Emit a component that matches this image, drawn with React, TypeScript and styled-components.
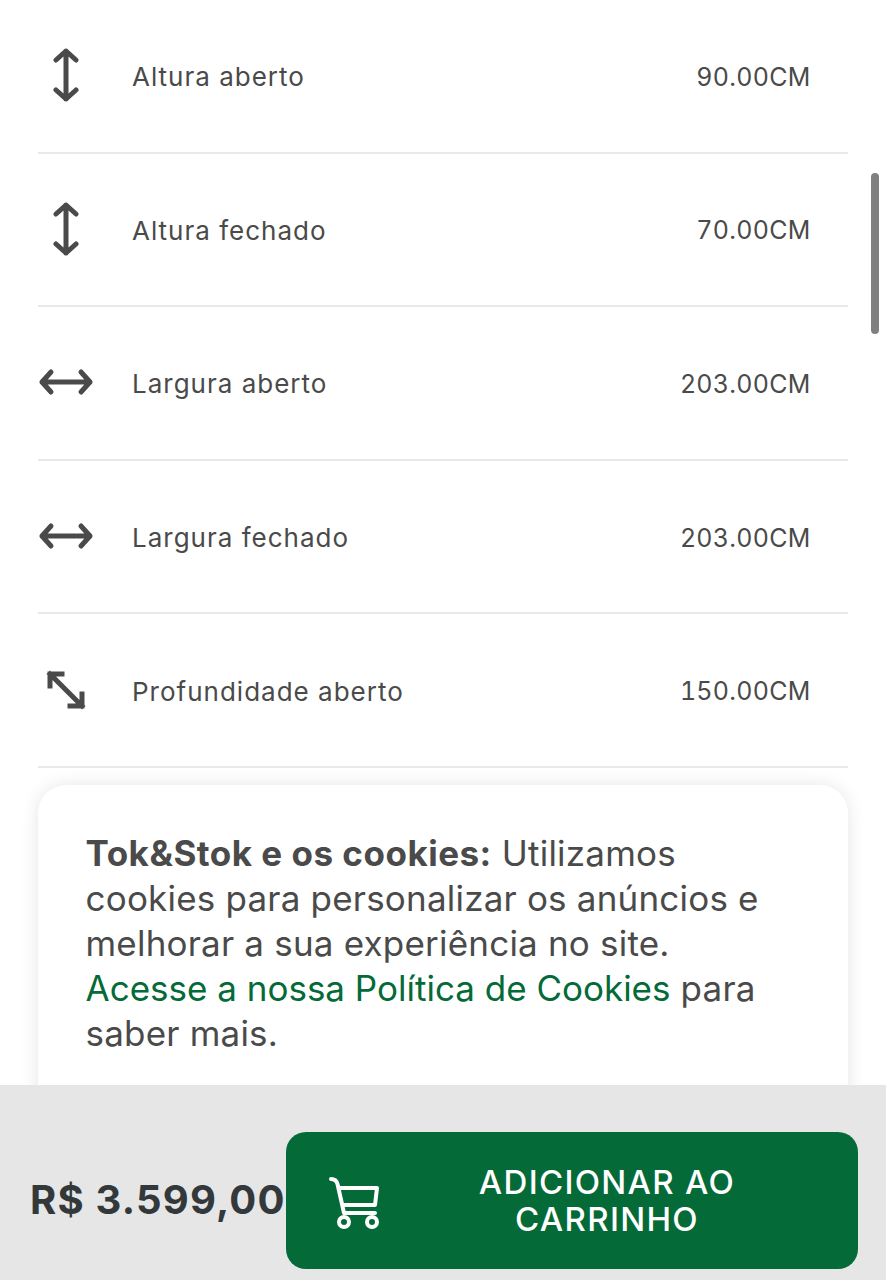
import React from "react";
import styled, { createGlobalStyle } from "styled-components";

const Global = createGlobalStyle`
  html, body { margin: 0; padding: 0; background: #fff; }
  #root { width: 886px; height: 1280px; }
`;

const FONT = `"Inter", "Noto Sans", sans-serif`;

const Page = styled.div`
  position: relative;
  width: 886px;
  height: 1280px;
  overflow: hidden;
  background: #fff;
  font-family: ${FONT};
  color: #4a4a4a;
`;

const SpecList = styled.ul`
  list-style: none;
  margin: 0;
  padding: 0 38px;
`;

const SpecRow = styled.li`
  box-sizing: border-box;
  height: 153.6px;
  display: flex;
  align-items: center;
  border-bottom: 2px solid #e9e9e9;
  padding-right: 37.5px;
`;

const IconSlot = styled.span`
  width: 56px;
  margin-right: 38px;
  flex: none;
  display: flex;
  justify-content: center;
  color: #4a4a4a;
`;

const SpecLabel = styled.span`
  flex: 1;
  padding-top: 2px;
  font-size: 26px;
  letter-spacing: 1px;
`;

const SpecValue = styled.span`
  padding-top: 2px;
  font-size: 25px;
  letter-spacing: 0.25px;
  font-variant-numeric: tabular-nums;
`;

const ScrollThumb = styled.div`
  position: absolute;
  left: 871px;
  top: 173px;
  width: 8px;
  height: 161px;
  border-radius: 4px;
  background: #808080;
`;

const CookieCard = styled.section`
  position: absolute;
  left: 38px;
  top: 785px;
  width: 810px;
  height: 400px;
  box-sizing: border-box;
  padding: 46px 82px 46px 47.5px;
  background: #fff;
  border-radius: 28px;
  box-shadow: 0 0 18px rgba(0, 0, 0, 0.1);
  font-size: 35px;
  line-height: 45px;
  letter-spacing: 0.2px;
`;

const CookieLead = styled.strong`
  letter-spacing: 0.5px;
`;

const CookieLink = styled.span`
  color: #046a38;
  letter-spacing: 0;
`;

const BottomBar = styled.footer`
  position: absolute;
  left: 0;
  right: 0;
  bottom: 0;
  height: 195px;
  box-sizing: border-box;
  display: flex;
  align-items: flex-start;
  padding: 47px 28px 0 30px;
  background: #e6e6e7;
`;

const Price = styled.div`
  width: 256px;
  flex: none;
  align-self: flex-start;
  margin-top: 45px;
  white-space: nowrap;
  font-size: 40px;
  line-height: 46px;
  font-weight: 700;
  letter-spacing: 1.2px;
  color: #33393b;
`;

const AddButton = styled.button`
  flex: 1;
  height: 137px;
  border: 0;
  border-radius: 20px;
  background: #046a38;
  color: #fff;
  display: flex;
  align-items: center;
  padding: 0 0 0 42px;
  font-family: ${FONT};
  font-size: 33px;
  font-weight: 500;
  line-height: 37px;
  letter-spacing: 1.3px;
`;

const ButtonLabel = styled.span`
  flex: 1;
  text-align: center;
  padding: 0 44px 0 20px;
`;

const CartSvg = styled.svg`
  flex: none;
  margin-top: 4px;
`;

const VerticalArrow = () => (
  <svg width="26" height="56" viewBox="0 0 26 56" fill="none" stroke="currentColor" strokeWidth="5" strokeLinecap="round" strokeLinejoin="round" style={{ marginTop: -1 }}>
    <path d="M13 4v48M3 13l10-9 10 9M3 43l10 9 10-9" />
  </svg>
);

const HorizontalArrow = () => (
  <svg width="56" height="28" viewBox="0 0 56 28" fill="none" stroke="currentColor" strokeWidth="5" strokeLinecap="round" strokeLinejoin="round" style={{ marginTop: -2 }}>
    <path d="M4 14h48M13 4 4 14l9 10M43 4l9 10-9 10" />
  </svg>
);

const DiagonalArrow = () => (
  <svg width="42" height="42" viewBox="0 0 42 42" fill="none" stroke="currentColor" strokeWidth="5" strokeLinecap="square" strokeLinejoin="miter" style={{ marginTop: -1 }}>
    <path d="M5 5l32 32M5 17V5h12M37 25v12H25" />
  </svg>
);

const CartIcon = () => (
  <CartSvg width="52" height="54" viewBox="0 0 52 54" fill="none" stroke="currentColor" strokeWidth="4" strokeLinecap="round" strokeLinejoin="round">
    <path d="M3 3c3.500 0 5.500 1.500 6.500 5l6.500 29h31M10.500 12H49l-2 17H15.500" />
    <circle cx="16" cy="46" r="5" />
    <circle cx="44" cy="46" r="5" />
  </CartSvg>
);

const specs = [
  { icon: <VerticalArrow />, label: "Altura aberto", value: "90.00CM" },
  { icon: <VerticalArrow />, label: "Altura fechado", value: "70.00CM" },
  { icon: <HorizontalArrow />, label: "Largura aberto", value: "203.00CM" },
  { icon: <HorizontalArrow />, label: "Largura fechado", value: "203.00CM" },
  { icon: <DiagonalArrow />, label: "Profundidade aberto", value: "150.00CM" },
];

export default function App() {
  return (
    <Page>
      <Global />
      <SpecList>
        {specs.map((s) => (
          <SpecRow key={s.label}>
            <IconSlot>{s.icon}</IconSlot>
            <SpecLabel>{s.label}</SpecLabel>
            <SpecValue>{s.value}</SpecValue>
          </SpecRow>
        ))}
      </SpecList>
      <ScrollThumb />
      <CookieCard>
        <CookieLead>Tok&amp;Stok e os cookies:</CookieLead> Utilizamos cookies para personalizar os anúncios e melhorar a sua experiência no site.{" "}
        <CookieLink>Acesse a nossa Política de Cookies</CookieLink> para saber mais.
      </CookieCard>
      <BottomBar>
        <Price>R$ 3.599,00</Price>
        <AddButton>
          <CartIcon />
          <ButtonLabel>ADICIONAR AO CARRINHO</ButtonLabel>
        </AddButton>
      </BottomBar>
    </Page>
  );
}
